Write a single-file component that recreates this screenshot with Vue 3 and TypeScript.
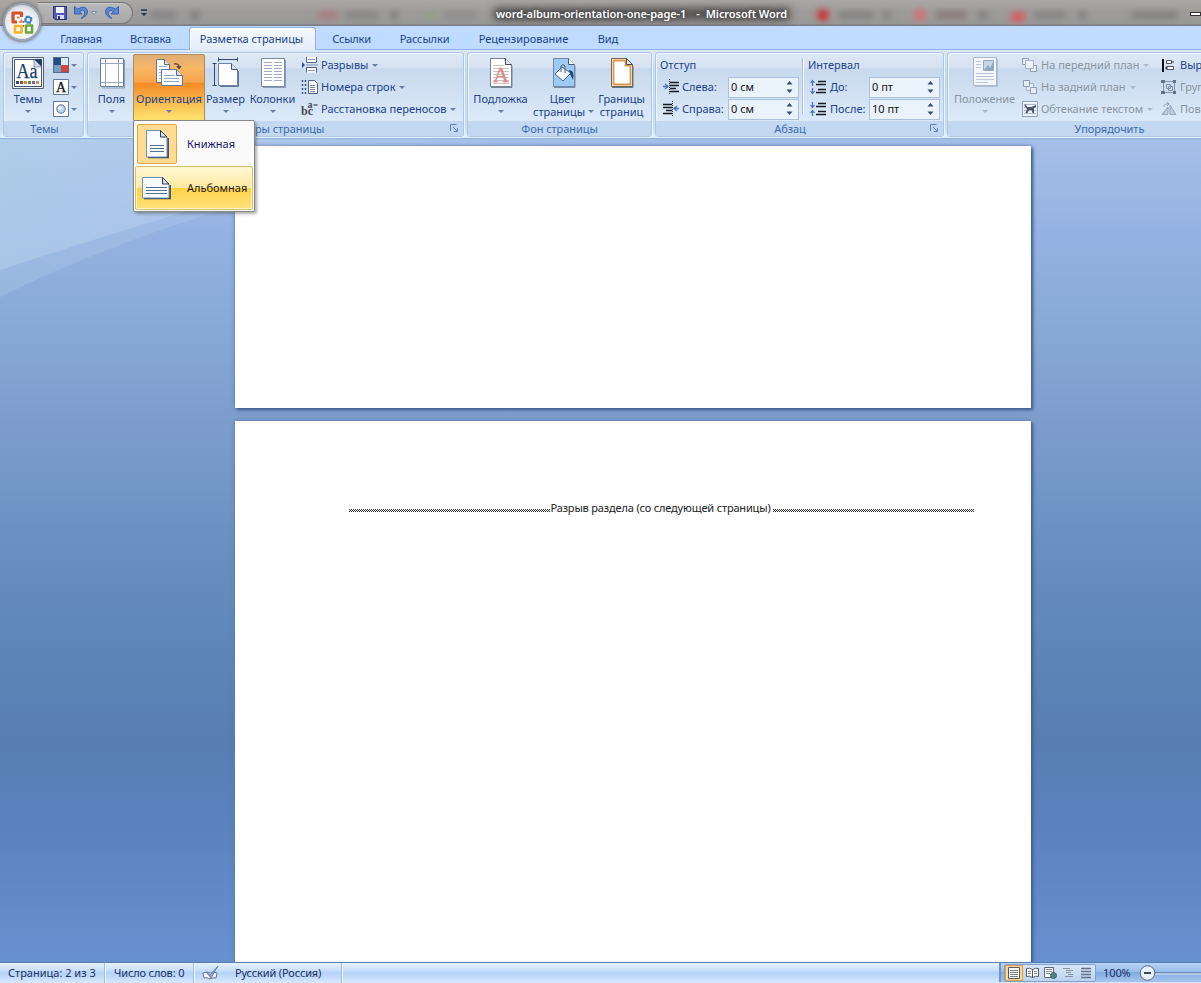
<script setup lang="ts">
interface Tab { label: string; width: number; spacing?: string; active?: boolean }

const tabs: Tab[] = [
  { label: 'Главная', width: 70, spacing: 'tight' },
  { label: 'Вставка', width: 69 },
  { label: 'Разметка страницы', width: 127, active: true },
  { label: 'Ссылки', width: 69, spacing: 'tight' },
  { label: 'Рассылки', width: 77 },
  { label: 'Рецензирование', width: 121, spacing: 'wide' },
  { label: 'Вид', width: 48 },
]

const smudges = [
  { x: 150, w: 26, c: '#77777a' }, { x: 190, w: 10, c: '#707070' },
  { x: 318, w: 20, c: '#b36d6d' }, { x: 345, w: 34, c: '#7c7c7c' }, { x: 390, w: 8, c: '#6d6d6d' },
  { x: 424, w: 12, c: '#8ea36f' }, { x: 444, w: 32, c: '#858585' },
  { x: 838, w: 36, c: '#757575' }, { x: 882, w: 10, c: '#777' },
  { x: 936, w: 30, c: '#7a6666' }, { x: 978, w: 10, c: '#707070' },
  { x: 1034, w: 32, c: '#777' }, { x: 1078, w: 9, c: '#707070' }, { x: 1132, w: 46, c: '#6f6f6f' },
]

const indents = [
  { label: 'Слева:', value: '0 см', left: true },
  { label: 'Справа:', value: '0 см', left: false },
]
const intervals = [
  { label: 'До:', value: '0 пт', before: true },
  { label: 'После:', value: '10 пт', before: false },
]
</script>

<template>
  <div class="window">
    <header class="titlebar">
      <svg class="glass" width="1201" height="26">
        <defs>
          <filter id="soft" x="-30%" y="-100%" width="160%" height="300%"><feGaussianBlur stdDeviation="3" /></filter>
          <filter id="halo" x="-10%" y="-100%" width="120%" height="300%"><feGaussianBlur stdDeviation="4" /></filter>
        </defs>
        <g filter="url(#soft)">
          <rect v-for="s in smudges" :key="s.x" :x="s.x" y="11" :width="s.w" height="8" :fill="s.c" opacity=".6" />
          <circle cx="823" cy="15" r="6" fill="#cc2f35" /><circle cx="920" cy="15" r="6" fill="#d4706f" /><rect x="1011" y="12" width="14" height="10" fill="#d35f5e" />
        </g>
        <rect x="494" y="8" width="296" height="12" fill="#3f3e3e" opacity=".8" filter="url(#halo)" />
      </svg>
      <div class="quick">
        <svg width="100" height="20" viewBox="0 0 100 20">
          <path d="M10.500 3.500h13v13h-11.500l-1.500-1.500z" fill="#5358bd" stroke="#2d2f7c" />
          <path d="M13 4h8v6h-8z" fill="#f1f3ff" /><path d="M14 12h7v4h-7z" fill="#d6dcf4" /><path d="M15 13h2v3h-2z" fill="#30327b" />
          <path d="M31.500 3.500v7.500h7.500l-2.500-2.500q3-2.500 5 0q1.500 3-3.500 7q7-2.500 6.500-7.500q-1.500-6.500-10-2z" fill="#5b88d6" stroke="#2f5cab" stroke-width=".9" stroke-linejoin="round" />
          <path d="M48.500 8.500h5l-2.500 3z" fill="#e9eef6" stroke="#657ba5" stroke-width=".8" />
          <path d="M75.500 3.500v7.500h-7.500l2.500-2.500q-3-2.500-5 0q-1.500 3 3.500 7q-7-2.500-6.500-7.500q1.500-6.500 10-2z" fill="#5b88d6" stroke="#2f5cab" stroke-width=".9" stroke-linejoin="round" />
        </svg>
      </div>
      <svg class="customize" width="7" height="9"><path d="M0 1h6" stroke="#1f3253" stroke-width="1.500" /><path d="M0 4h6l-3 3z" fill="#1f3253" /></svg>
      <div class="doc-title"><span>word-album-orientation-one-page-1</span><span class="dash">-</span><span>Microsoft Word</span></div>
      <i class="minimize"></i>
    </header>

    <div class="office">
      <svg width="27" height="27" viewBox="0 0 27 27" fill="none" stroke-linejoin="round">
        <path d="M12.500 8V4h-8.500v9h4" stroke="#d4502a" stroke-width="3.200" />
        <path d="M8 8.500h2.500M12.500 10.500v2.500h-2" stroke="#e87c3c" stroke-width="2" />
        <path d="M16.500 8h5.500v5.500h-5.500z" stroke="#3f86cc" stroke-width="2.400" stroke-dasharray="4.500 1" />
        <path d="M6 17h6.500v6.500h-6.500z" stroke="#f3b62b" stroke-width="2.600" />
        <path d="M17 16.500h6v7h-6z" stroke="#6fa53a" stroke-width="2.600" />
        <path d="M14.500 12v6" stroke="#c9582f" stroke-width="1.200" stroke-dasharray="2 2" />
      </svg>
    </div>

    <nav class="tabs">
      <div v-for="t in tabs" :key="t.label" class="tab" :class="[t.spacing, { active: t.active }]" :style="{ width: t.width + 'px' }">{{ t.label }}</div>
    </nav>

    <section class="ribbon">
      <div class="group themes">
        <div class="body">
          <div class="big w45">
            <svg width="32" height="32" viewBox="0 0 32 32">
              <path d="M.5.5h31v31H.500z" fill="#eef2f7" stroke="#536277" /><path d="M2.500 2.500h20l7 7v20h-27z" fill="#fff" stroke="#46587a" /><path d="M22 2h8v8z" fill="#1f3c6d" /><path d="M22 2v8h8z" fill="#ccd9ed" stroke="#46587a" stroke-width=".6" />
              <text x="4.500" y="21" font-family="Liberation Serif, serif" font-size="20" textLength="21" lengthAdjust="spacingAndGlyphs" fill="#173b70" stroke="#173b70" stroke-width=".25">Aa</text>
              <path d="M4 25.500h3" stroke="#315184" stroke-width="3" /><path d="M8 25.500h3" stroke="#9b4a3f" stroke-width="3" /><path d="M12 25.500h3" stroke="#c88b3b" stroke-width="3" /><path d="M16 25.500h3" stroke="#5f874f" stroke-width="3" /><path d="M20 25.500h3" stroke="#7565a0" stroke-width="3" /><path d="M24 25.500h3" stroke="#d7904b" stroke-width="3" />
            </svg>
            <span>Темы</span><i class="arrow"></i>
          </div>
          <div class="mini">
            <div><svg width="16" height="16"><path d="M0 0h8v8H0z" fill="#254c83" /><path d="M8 0h8v8H8z" fill="#dcebf6" /><path d="M0 8h8v8H0z" fill="#739fc8" /><path d="M8 8h8v8H8z" fill="#cf4540" /><path d="M.5.500h15v15H.500z" fill="none" stroke="#526b8b" /></svg><i class="arrow"></i></div>
            <div><svg width="16" height="16"><path d="M.5.500h15v15H.500z" fill="#fff" stroke="#60789b" /><text x="3" y="13" font-family="Liberation Serif, serif" font-size="14" fill="#111" stroke="#111" stroke-width=".3">A</text></svg><i class="arrow"></i></div>
            <div><svg width="16" height="16"><path d="M.5.500h15v15H.500z" fill="#fff" stroke="#60789b" /><circle cx="8" cy="8" r="4.200" fill="#bdd4f1" stroke="#5474a3" /><circle cx="7" cy="7" r="1.800" fill="#f2f8ff" /></svg><i class="arrow"></i></div>
          </div>
        </div>
        <div class="caption">Темы</div>
      </div>

      <div class="group setup">
        <div class="body">
          <div class="big w44">
            <svg width="26" height="32" viewBox="0 0 26 32"><path d="M1.500 1.500h23v28h-23z" fill="#fff" stroke="#687f9b" /><path d="M6.500 2v27M19.500 2v27M2 6.500h22M2 25.500h22" stroke="#93a7c4" /><path d="M25.500 3v28H3" fill="none" stroke="#8b9db6" /></svg>
            <span>Поля</span><i class="arrow"></i>
          </div>
          <div class="big orient">
            <svg width="30" height="32" viewBox="0 0 30 32">
              <path d="M2.500 2.500h8l5 5v18h-13z" fill="#fff" stroke="#657996" /><path d="M10.500 2.500v5h5" fill="#dce7f5" stroke="#536883" /><path d="M5 9.500h8M5 12.500h5M5 15.500h3M5 18.500h3M5 21.500h3" stroke="#a1b2c9" />
              <path d="M7.500 12.500h15l6 6v10h-21z" fill="#fff" stroke="#657996" /><path d="M22.500 12.500v6h6" fill="#d5e2f3" stroke="#536883" /><path d="M10 18.500h11M10 21.500h15M10 24.500h15" stroke="#94a7c0" />
              <path d="M20 7q5-1 5 3M23 9l2 2.500 2-2.500" fill="none" stroke="#4d4a43" stroke-width="1.300" />
            </svg>
            <span>Ориентация</span><i class="arrow"></i>
            <div class="menu">
              <div class="item">
                <div class="chosen"><svg width="24" height="30" viewBox="0 0 24 30"><path d="M3 28.500h20V9" fill="none" stroke="#25334a" stroke-width="1.600" /><path d="M1.500 1.500h14l6.500 6.500v20h-20.500z" fill="#f8fbff" stroke="#6d91be" /><path d="M15.500 1.500v6.500h6.500z" fill="#d3e3f8" stroke="#2c3c55" /><path d="M5 16.500h14M5 19.500h14M5 22.500h14" stroke="#526f9b" /></svg></div>
                <span>Книжная</span>
              </div>
              <div class="item hot">
                <div class="pic"><svg width="30" height="24" viewBox="0 0 30 24"><path d="M3 22.500h26V9" fill="none" stroke="#25334a" stroke-width="1.600" /><path d="M1.500 1.500h20l6.500 6.500v14h-26.500z" fill="#f8fbff" stroke="#6d91be" /><path d="M21.500 1.500v6.500h6.500z" fill="#d3e3f8" stroke="#2c3c55" /><path d="M5 11.500h21M5 14.500h21M5 17.500h21" stroke="#526f9b" /></svg></div>
                <span>Альбомная</span>
              </div>
            </div>
          </div>
          <div class="big w41">
            <svg width="28" height="32" viewBox="0 0 28 32"><path d="M6.500 2.500h19M6.500.500v4M25.500.500v4M2.500 6v23M.500 6.500h4M.500 28.500h4" stroke="#36496f" fill="none" /><path d="M6.500 6.500h13l6 6v16h-19z" fill="#fff" stroke="#6c85a8" /><path d="M19.500 6.500v6h6" fill="#d6e3f5" stroke="#42597b" /><path d="M8 29.500h18.500V14" fill="none" stroke="#617490" /></svg>
            <span>Размер</span><i class="arrow"></i>
          </div>
          <div class="big w54">
            <svg width="28" height="32" viewBox="0 0 28 32"><path d="M2.500 1.500h23v28h-23z" fill="#fff" stroke="#758ba8" /><path d="M26.500 3v27.500H4" fill="none" stroke="#8a9cb6" /><path d="M5 5.500h8M5 8.500h8M5 11.500h8M5 14.500h8M5 17.500h8M5 20.500h8M5 23.500h8M15 5.500h8M15 8.500h8M15 11.500h8M15 14.500h8M15 17.500h8M15 20.500h8M15 23.500h8" stroke="#9dadc8" /></svg>
            <span>Колонки</span><i class="arrow"></i>
          </div>
          <div class="list">
            <div><svg width="18" height="16"><path d="M5.500 0v5.500h10V0M5.500 15.500v-5h10v5" fill="#fff" stroke="#536685" /><path d="M7 2.500h7M7 13.500h7M5 8h12" stroke="#7d94b9" /><path d="M1 5l3 3-3 3z" fill="#304e86" /></svg><span>Разрывы</span><i class="arrow"></i></div>
            <div><svg width="18" height="16"><path d="M7.500 1.500h6l3 3v10h-9z" fill="#fff" stroke="#4d607f" /><path d="M9 6.500h5M9 8.500h5M9 10.500h5M9 12.500h5" stroke="#758aae" /><path d="M1.500 1v15M4.500 1v15" stroke="#36547f" stroke-dasharray="2 2" stroke-width="1.500" /></svg><span>Номера строк</span><i class="arrow"></i></div>
            <div><svg width="18" height="16"><text x="0" y="14" font-family="Liberation Serif, serif" font-size="12" font-weight="bold" fill="#45494f">bc</text><text x="6.500" y="7" font-family="Liberation Serif, serif" font-size="10" font-weight="bold" fill="#45494f">a</text><path d="M12.500 4h4" stroke="#45494f" stroke-width="1.300" /></svg><span>Расстановка переносов</span><i class="arrow"></i></div>
          </div>
        </div>
        <div class="caption">Параметры страницы<svg class="launch" width="9" height="9"><path d="M.5 7V.500h6M3 3l4 4M7.500 4v3.500H4" fill="none" stroke="#6484b1" /></svg></div>
      </div>

      <div class="group background">
        <div class="body">
          <div class="big w60">
            <svg width="24" height="32" viewBox="0 0 24 32"><path d="M1.500 1.500h15l6 6v22h-21z" fill="#fff" stroke="#758198" /><path d="M16.500 1.500v6h6" fill="#e1e8f2" stroke="#404c60" /><path d="M23 9v21.500H2" fill="none" stroke="#77869c" /><path d="M4 8.500h11M4 11.500h16M4 14.500h16M4 17.500h16M4 20.500h16M4 23.500h16M4 26.500h16" stroke="#c9c0ca" /><text x="4" y="25" font-family="Liberation Serif, serif" font-size="22" fill="#df8579" stroke="#df8579" stroke-width=".3">A</text></svg>
            <span>Подложка</span><i class="arrow"></i>
          </div>
          <div class="big w66">
            <svg width="24" height="32" viewBox="0 0 24 32"><path d="M1.500 1.500h15l6 6v22h-21z" fill="#9dcbf3" stroke="#6e8bad" /><path d="M16.500 1.500v6h6" fill="#fff" stroke="#455d7a" /><path d="M23 9v21.500H2" fill="none" stroke="#778ea9" /><path d="M10 10l9 6-8 8-8-7z" fill="#f9fcff" stroke="#4c6689" /><path d="M9 15V9q2-3 4 0v7" fill="none" stroke="#465b76" /><path d="M17 13q6 0 4 10l-3-6z" fill="#174b83" /></svg>
            <span class="tint">Цвет</span><span class="second">страницы<i class="arrow"></i></span>
          </div>
          <div class="big w53">
            <svg width="24" height="32" viewBox="0 0 24 32"><path d="M1.500 1.500h15l6 6v22h-21z" fill="#fff" stroke="#7c6850" /><path d="M3.500 3.500h12v5h5v19h-17z" fill="#fff" stroke="#da9848" stroke-width="1.800" /><path d="M16.500 1.500v6h6z" fill="#eee" stroke="#494a50" /><path d="M23 9v21.500H2" fill="none" stroke="#687384" /></svg>
            <span>Границы</span><span class="second">страниц</span>
          </div>
        </div>
        <div class="caption">Фон страницы</div>
      </div>

      <div class="group paragraph">
        <div class="body">
          <div class="fields">
            <h4>Отступ</h4>
            <div v-for="f in indents" :key="f.label" class="field">
              <svg width="16" height="16" :class="{ flip: !f.left }"><path d="M7 3.500h9M7 6.500h9M7 9.500h6M7 12.500h9" stroke="#18191d" stroke-width="1.700" /><path d="M6.500 0v16" stroke="#222" stroke-dasharray="1 1" /><path d="M0 7.500h5M2 5l3 2.500-3 2.500" fill="none" stroke="#4774bd" stroke-width="1.300" /></svg>
              <label>{{ f.label }}</label>
              <div class="spin"><b>{{ f.value }}</b><svg width="7" height="14"><path d="M.500 4.500h6l-3-3.500zM.500 9.500h6l-3 3.500z" fill="#334d79" /></svg></div>
            </div>
          </div>
          <i class="rule"></i>
          <div class="fields second-fields">
            <h4>Интервал</h4>
            <div v-for="f in intervals" :key="f.label" class="field">
              <svg width="16" height="16"><path d="M8 2.500h8M6 5.500h10M8 10.500h8M6 13.500h10" stroke="#18191d" stroke-width="1.400" /><path v-if="f.before" d="M2.500 7V2M.500 4l2-2.500 2 2.500M2.500 9v5M.500 12l2 2.500 2-2.500" fill="none" stroke="#4774bd" stroke-width="1.200" /><path v-else d="M2.500 1v5M.500 4l2 2.500 2-2.500M2.500 15v-5M.500 12l2-2.500 2 2.500" fill="none" stroke="#4774bd" stroke-width="1.200" /></svg>
              <label>{{ f.label }}</label>
              <div class="spin"><b>{{ f.value }}</b><svg width="7" height="14"><path d="M.500 4.500h6l-3-3.500zM.500 9.500h6l-3 3.500z" fill="#334d79" /></svg></div>
            </div>
          </div>
        </div>
        <div class="caption">Абзац<svg class="launch" width="9" height="9"><path d="M.5 7V.500h6M3 3l4 4M7.500 4v3.500H4" fill="none" stroke="#6484b1" /></svg></div>
      </div>

      <div class="group arrange">
        <div class="body">
          <div class="big w68 off">
            <svg width="26" height="32" viewBox="0 0 26 32"><path d="M1.500.500h23v28h-23z" fill="#f3f7fc" stroke="#a9b7ca" /><path d="M25.500 2v27.500H3" fill="none" stroke="#b4c1d2" /><path d="M11.500 3.500h10v10h-10z" fill="#cbd7e7" stroke="#94a8c4" /><path d="M12 13l4-5 2 3 3-6v8z" fill="#91a6c1" /><path d="M4 4.500h5M4 7.500h5M4 10.500h5M4 16.500h18M4 19.500h18M4 22.500h18M4 25.500h12" stroke="#bac7d8" /></svg>
            <span>Положение</span><i class="arrow"></i>
          </div>
          <div class="list order off">
            <div><svg width="16" height="16" fill="#e5edf7" stroke="#8d9db4"><path d="M.500 1.500h6v6h-6zM8.500 8.500h6v6h-6z" /><path d="M3.500 3.500h8v8h-8z" fill="#eef3fa" stroke="#a5b4ca" /></svg><span>На передний план</span><i class="arrow"></i></div>
            <div><svg width="16" height="16" fill="#e5edf7" stroke="#8d9db4"><path d="M4.500 4.500h7v7h-7z" stroke="#a5b4ca" /><path d="M1.500 1.500h6v6h-6zM8.500 8.500h6v6h-6z" /></svg><span>На задний план</span><i class="arrow"></i></div>
            <div><svg width="16" height="16"><path d="M.5.500h15v15H.500z" fill="#edf2f8" stroke="#8fa0b8" /><path d="M2 3.500h12M2 6.500h12M2 9.500h12M2 12.500h12" stroke="#a9b7cc" /><path d="M3 3l2.500 3h4l2-1 2.500-1v2l-2 1v5h-1.500l-1-3-2.500 0-1.500 3h-2l1.500-4-2.500-3z" fill="#4b5668" /></svg><span>Обтекание текстом</span><i class="arrow"></i></div>
          </div>
          <div class="list align">
            <div><svg width="16" height="16"><path d="M2 2v13" stroke="#111" stroke-width="2" /><path d="M5.500 3.500h5v3h-5zM5.500 9.500h7v3h-7z" fill="#fff" stroke="#4a5669" /><path d="M10 5h3M4 11h3" stroke="#333" /></svg><span>Выровнять</span></div>
            <div class="off"><svg width="16" height="16"><path d="M2.500 2.500h11v11h-11z" fill="none" stroke="#8594ab" /><path d="M5.500 5.500h4v4h-4zM7.500 7.500h4v4h-4z" fill="#dbe5f2" stroke="#7e8da6" /><path d="M0 1h4v3H0zM12 1h3v3h-3zM0 12h4v3H0zM12 12h3v3h-3z" fill="#64738b" /></svg><span>Группировать</span></div>
            <div class="off"><svg width="16" height="16"><path d="M1 13.500h6V6zM9 4l6 9.500H9z" fill="#c0cbd9" stroke="#96a5ba" /><path d="M3 6q0-4 5-3M6 1l2 2-2 2" fill="none" stroke="#8d9cb2" /></svg><span>Повернуть</span></div>
          </div>
        </div>
        <div class="caption">Упорядочить</div>
      </div>
    </section>

    <main class="workspace">
      <svg class="swoosh" width="1201" height="400" viewBox="0 0 1201 400">
        <defs>
          <linearGradient id="sweep" x1="0" x2="1" y1="0" y2="0"><stop stop-color="#b8d6ec" stop-opacity=".5" /><stop offset=".45" stop-color="#bed1f0" stop-opacity=".45" /><stop offset="1" stop-color="#bed1f0" stop-opacity="0" /></linearGradient>
        </defs>
        <path d="M0 0H600Q260 30 0 158z" fill="url(#sweep)" opacity=".5" />
        <path d="M0 0H450Q230 55 0 131z" fill="url(#sweep)" opacity=".9" />
      </svg>
      <div class="page first"></div>
      <div class="page next"><div class="break"><i></i><span>Разрыв раздела (со следующей страницы)</span><i></i></div></div>
    </main>

    <footer class="status">
      <div class="cell c1">Страница: 2 из 3</div>
      <div class="cell c2">Число слов: 0</div>
      <div class="cell c3"><svg width="18" height="16"><path d="M1 8q3-2 7 0q4-2 7 0l-1 5q-3-1-6 1q-3-2-6-1z" fill="#f3f6fb" stroke="#637997" /><path d="M4 7l4 3 8-9-7 12z" fill="#8da8d1" stroke="#5a76a4" stroke-width=".8" /></svg><span>Русский (Россия)</span></div>
      <div class="tools">
        <div class="views">
          <i class="view on"><svg width="12" height="12"><path d="M.5.500h11v11H.500z" fill="#fff" stroke="#535a65" /><path d="M2 3.500h8M2 5.500h8M2 7.500h8M2 9.500h8" stroke="#767c86" /></svg></i>
          <i class="view"><svg width="13" height="12"><path d="M.5 1.500q3-1 6 1q3-2 6-1v8q-3-1-6 1q-3-2-6-1zM6.500 2v9" fill="#fff" stroke="#535d6c" /><path d="M2 4.500h3M2 6.500h3M8 4.500h3M8 6.500h3" stroke="#7c8796" /></svg></i>
          <i class="view"><svg width="13" height="12"><path d="M.5.500h9v10h-9z" fill="#fff" stroke="#5c6675" /><path d="M2 2.500h6M2 4.500h6M2 6.500h4" stroke="#7e8795" /><circle cx="9.500" cy="8.500" r="3" fill="#4e887c" stroke="#36617e" /></svg></i>
          <i class="view"><svg width="12" height="12"><path d="M1 1.500h7M4 3.500h7M4 5.500h5M6 7.500h5M3 9.500h8" stroke="#8791a0" /></svg></i>
          <i class="view"><svg width="12" height="12"><path d="M1 1.500h10M1 4.500h10M1 7.500h10M1 10.500h10" stroke="#657184" stroke-width="1.300" /></svg></i>
        </div>
        <span class="zoom">100%</span>
        <svg class="slider" width="62" height="18"><path d="M16 9h46" stroke="#4f6f9f" /><path d="M16 10h46" stroke="#eaf4ff" /><circle cx="8.500" cy="9" r="7.300" fill="#e8eef7" stroke="#55677f" /><path d="M5 9h7" stroke="#3d4857" stroke-width="2" /></svg>
      </div>
    </footer>
  </div>
</template>

<style>
html, body { margin: 0; overflow: hidden; }
</style>

<style scoped>
.window { position: relative; display: flex; flex-direction: column; width: 1201px; height: 983px; overflow: hidden; font: 11px/14px "Noto Sans", "Open Sans", sans-serif; color: #21428a; background: #bfdbff; }
.window * { box-sizing: border-box; }
svg { display: block; flex: none; }
span, label, h4, b { white-space: nowrap; }
.titlebar { position: relative; display: flex; flex: none; height: 26px; padding-left: 38px; background: linear-gradient(#aaa7a4, #9e9c9a 45%, #989898 90%, #777d84 98%); }
.glass { position: absolute; left: 0; top: 0; }
.quick { position: relative; width: 95px; height: 22px; margin-top: 2px; padding: 0 0 0 12px; border: 1px solid #777; border-left: 0; border-radius: 0 11px 11px 0; background: linear-gradient(#b9b9b9, #a8a8a8); box-shadow: inset 0 1px #cacaca; }
.quick svg { margin-left: -7px; }
.customize { position: relative; margin: 9px 0 0 8px; }
.doc-title { position: relative; display: flex; width: 292px; margin: 7px 0 0 348px; font-weight: 600; color: #fff; letter-spacing: -.07px; text-shadow: 0 0 4px #333; }
.dash { margin: 0 6px 0 10px; }
.minimize { position: relative; width: 14px; height: 4px; margin: 12px 0 0 403px; border: 1px solid #333; background: #fff; }
.office { position: absolute; z-index: 4; left: 4px; top: 4px; display: flex; align-items: center; justify-content: center; width: 36px; height: 36px; border-radius: 50%; border: 1px solid #98a3b0; background: radial-gradient(circle at 50% 60%, #fff 20%, #e8ebf0 60%, #b4bac4 95%); box-shadow: 0 0 0 1px #a5abb3, 0 0 3px 2px #77797d; }
.tabs { display: flex; flex: none; height: 24px; padding: 1px 0 0 46px; background: #bfdbff; border-bottom: 1px solid #8db2e3; }
.tab { height: 23px; padding-top: 5px; text-align: center; white-space: nowrap; letter-spacing: -.12px; }
.tab.tight { letter-spacing: -.25px; }
.tab.wide { letter-spacing: 0; }
.tab.active { margin: 0 1px 0 4px; height: 24px; padding-right: 2px; border: 1px solid #8db2e3; border-bottom: 0; border-radius: 3px 3px 0 0; background: linear-gradient(#f6faff, #e2ecf8); box-shadow: inset 1px 1px #fff; padding-top: 4px; letter-spacing: -.04px; }
.ribbon { position: relative; z-index: 2; display: flex; flex: none; gap: 3px; height: 89px; padding: 2px 0 0 3px; background: linear-gradient(#dce9f8, #c7dbf3 20%, #c9def5 90%, #d6f2ff 96%); border-bottom: 1px solid #8bb0da; }
.group { flex: none; display: flex; flex-direction: column; height: 85px; border: 1px solid #adc7e5; border-radius: 3px; background: linear-gradient(#dfe9f5, #d5e1f1 18%, #c8d9ed 19%, #dbe9f9 80%); box-shadow: inset 1px 1px #edf4fc, 1px 1px #eaf4fe; }
.themes { width: 81px; }
.setup { width: 377px; }
.background { width: 185px; }
.paragraph { width: 289px; }
.arrange { width: 325px; }
.body { display: flex; flex: none; height: 68px; }
.caption { position: relative; height: 15px; line-height: 15px; text-align: center; color: #3e6aaa; background: #c2d8f1; letter-spacing: -.05px; }
.themes .caption { padding-left: 2px; }
.setup .caption { padding-right: 18px; }
.paragraph .caption { padding-right: 19px; }
.launch { position: absolute; right: 4px; top: 3px; }
.big { display: flex; flex: none; flex-direction: column; align-items: center; height: 67px; padding-top: 4px; }
.big > span { margin-top: 3px; height: 13px; line-height: 13px; }
.arrow { flex: none; width: 0; height: 0; border: solid transparent; border-width: 3px 3px 0; border-top-color: #667fa7; }
.big > .arrow { margin-top: 5px; }
.big .second { display: flex; align-items: center; margin-top: 0; }
.second .arrow { margin-left: 3px; }
.tint { padding-right: 2px; }
.w45 { width: 48px; }
.w44 { width: 45px; padding-left: 2px; }
.w41 { width: 41px; }
.w54 { width: 53px; }
.w60 { width: 65px; }
.w66 { width: 61px; }
.w53 { width: 55px; }
.w68 { width: 73px; }
.mini { display: flex; flex-direction: column; gap: 6px; padding: 4px 0 0 1px; }
.mini > div { display: flex; align-items: center; gap: 2px; }
.orient { position: relative; width: 72px; height: 67px; margin-top: 1px; padding-top: 2px; border: 1px solid #ae8b5b; border-radius: 2px 2px 0 0; background: linear-gradient(#dfae75, #f8b766 20%, #f8a44a 42%, #f58a25 43%, #f9b94e 72%, #ffe36f); }
.orient > span { margin-top: 3px; }
.menu { position: absolute; z-index: 5; left: -1px; top: 65px; width: 122px; height: 92px; padding: 1px; border: 1px solid #868686; border-radius: 2px; background: #fafafa; box-shadow: 2px 2px 3px #5557; color: #15156e; }
.item { display: flex; align-items: center; height: 44px; }
.item span { margin-left: 10px; }
.chosen { display: flex; align-items: center; justify-content: center; width: 40px; height: 40px; margin-left: 2px; border: 1px solid #e7a843; border-radius: 2px; background: #ffdc91; }
.pic { width: 41px; padding-left: 5px; }
.hot { border: 1px solid #d5bd72; border-radius: 2px; background: linear-gradient(#fff8d6, #ffeaa1 49%, #ffd247 50%, #ffe27c); box-shadow: inset 0 0 0 1px #fff6c6; color: #191919; }
.list { display: flex; flex-direction: column; padding-top: 1px; }
.list > div { display: flex; align-items: center; height: 22px; }
.setup .list { padding-left: 2px; }
.setup .list svg { margin-right: 2px; }
.list .arrow { margin-left: 4px; }
.fields { width: 144px; padding-left: 4px; }
.fields h4 { margin: 5px 0 4px; font: inherit; }
.field { display: flex; align-items: center; height: 22px; padding-left: 3px; }
.field svg { margin-right: 3px; }
.field label { width: 46px; }
.flip { transform: scaleX(-1); }
.spin { display: flex; align-items: center; justify-content: space-between; width: 71px; height: 21px; padding: 0 2px; border: 1px solid #abc1de; background: #eaf2fb; color: #111; }
.spin b { font-weight: 400; }
.field .spin svg { margin-right: 3px; }
.rule { width: 2px; height: 57px; margin: 5px 3px 0 3px; background: #a9c1de; border-right: 1px solid #f5faff; }
.second-fields { width: 138px; padding-left: 1px; }
.second-fields .field { padding-left: 2px; }
.second-fields .field svg { margin-right: 4px; }
.second-fields .field label { width: 39px; }
.second-fields .field .spin svg { margin-right: 3px; }
.off { color: #8b949f; }
.off .arrow { border-top-color: #aab6c9; }
.order { width: 140px; padding-left: 1px; }
.order svg, .align svg { margin-right: 3px; }
.workspace { position: relative; flex: 1; padding: 7px 0 0 235px; overflow: hidden; background: linear-gradient(#a6bfe9, #95b3e2 11%, #8aacd8 20%, #7c9dcb 35%, #6b91c2 48%, #638abb 56%, #577db3 73%, #5b82bd 83%, #6791ce 100%); }
.swoosh { position: absolute; left: 0; top: 0; }
.page { position: relative; width: 796px; background: #fefefe; box-shadow: 2px 2px 3px #3d5f90, 0 0 4px #587cae; }
.first { height: 262px; }
.next { height: 560px; margin-top: 13px; padding: 80px 57px 0 114px; }
.break { display: flex; align-items: center; color: #222; letter-spacing: -.16px; }
.break span { padding-right: 2px; }
.break i { flex: 1; height: 3px; margin-top: 5px; background: conic-gradient(#fff 25%, #333 0 50%, #fff 0 75%, #333 0) 0 0 / 2px 2px; }
.status { position: relative; display: flex; flex: none; height: 21px; padding-bottom: 1px; border-top: 1px solid #567db0; background: linear-gradient(#e5f1ff, #cbe0fb 35%, #b4d2f8 50%, #d7e8fc); color: #19305f; }
.cell { display: flex; align-items: center; height: 20px; white-space: nowrap; border-right: 1px solid #9fbde3; box-shadow: 1px 0 #f2f8ff; letter-spacing: -.15px; }
.c1 { width: 105px; padding-left: 8px; letter-spacing: 0; }
.c2 { width: 89px; padding-left: 9px; }
.c3 { width: 148px; padding-left: 8px; gap: 15px; }
.tools { display: flex; align-items: center; width: 202px; margin-left: auto; padding-left: 3px; border-left: 2px solid #6f94c6; background: linear-gradient(#b9d5f7, #98bce9 45%, #82ace0 50%, #a5c5ed); }
.views { display: flex; width: 93px; height: 18px; border: 1px solid #819fc7; border-radius: 2px; background: linear-gradient(#d8e6f7, #bcd2ef); }
.view { display: flex; align-items: center; justify-content: center; width: 18px; }
.on { background: #ffd791; border: 1px solid #dba04b; }
.zoom { width: 36px; margin-left: 7px; letter-spacing: -.1px; }
.slider { margin-left: 2px; }
</style>
